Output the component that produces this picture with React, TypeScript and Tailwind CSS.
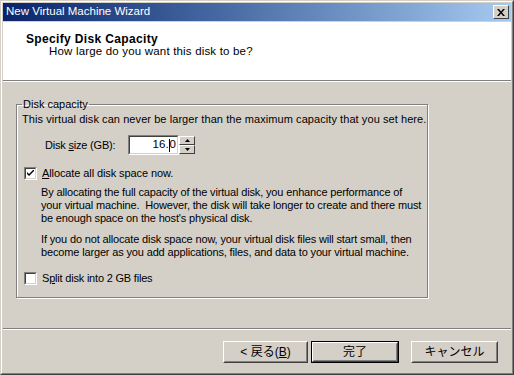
import React from "react";

const F = { fontFamily: '"Liberation Sans", Arial, sans-serif' };
const J = { fontFamily: '"Liberation Sans", "Noto Sans CJK JP", sans-serif' };

function Check({ checked }: { checked?: boolean }) {
  return (
    <div className="w-[13px] h-[13px] border border-t-[#808080] border-l-[#808080] border-r-white border-b-white shrink-0">
      <div className="w-full h-full border border-t-[#404040] border-l-[#404040] border-r-[#d4d0c8] border-b-[#d4d0c8] bg-white flex items-center justify-center">
        {checked && (
          <svg width="7" height="7" viewBox="0 0 7 7">
            <path d="M0 2 L0 4 L2 6 L7 1 L7 -1 L2 4 Z" fill="#000" />
          </svg>
        )}
      </div>
    </div>
  );
}

function Btn({ children, def, w }: { children: React.ReactNode; def?: boolean; w: string }) {
  const inner = (
    <div className="w-full h-full border border-t-white border-l-white border-r-[#404040] border-b-[#404040] bg-[#d4d0c8]">
      <div className="w-full h-full border border-t-[#d4d0c8] border-l-[#d4d0c8] border-r-[#808080] border-b-[#808080] flex items-center justify-center text-[12px] text-black">
        {children}
      </div>
    </div>
  );
  return def ? (
    <div className={`${w} h-[22px] border border-black`}>{inner}</div>
  ) : (
    <div className={`${w} h-[22px]`}>{inner}</div>
  );
}

export default function App() {
  return (
    <div className="w-[514px] h-[375px] border border-t-[#d4d0c8] border-l-[#d4d0c8] border-r-[#404040] border-b-[#404040] bg-[#d4d0c8]" style={F}>
      <div className="w-full h-full border border-t-white border-l-white border-r-[#808080] border-b-[#808080] p-[1px] flex flex-col">
        {/* title */}
        <div className="h-[18px] bg-gradient-to-r from-[#0a246a] to-[#a6caf0] flex items-center pl-[3px] pr-[2px] shrink-0">
          <span className="text-white text-[11.5px] leading-none flex-1">New Virtual Machine Wizard</span>
          <div className="w-[16px] h-[14px] border border-t-white border-l-white border-r-[#404040] border-b-[#404040] bg-[#d4d0c8] flex items-center justify-center">
            <svg width="8" height="7" viewBox="0 0 8 7">
              <path d="M0 0h2l2 2.5L6 0h2L5 3.5 8 7H6L4 4.5 2 7H0l3-3.5z" fill="#000" />
            </svg>
          </div>
        </div>
        {/* header */}
        <div className="h-[59px] bg-white border-b border-[#808080] shrink-0 mt-[1px] pl-[23px] pt-[11px]">
          <div className="text-[12px] font-bold leading-[12px] tracking-[0.35px] text-black">Specify Disk Capacity</div>
          <div className="text-[11.5px] leading-[12px] tracking-[0.18px] text-black pl-[23px] mt-[0px]">How large do you want this disk to be?</div>
        </div>
        <div className="h-[1px] bg-white shrink-0" />
        {/* body */}
        <div className="flex-1 flex flex-col">
          <fieldset className="ml-[13px] mt-[16px] w-[412px] h-[200px] border border-[#808080] shadow-[inset_1px_1px_0_#fff,1px_1px_0_#fff] pl-[5px] pr-0 text-[11px] text-black whitespace-nowrap">
            <legend className="ml-0 px-[1px] leading-[13px]">Disk capacity</legend>
            <div className="leading-[13px] mt-[2px] tracking-[0.07px]">This virtual disk can never be larger than the maximum capacity that you set here.</div>
            <div className="flex items-center mt-[9px] ml-[23px] h-[20px]">
              <span className="w-[83px] leading-[13px] tracking-[-0.2px]">Disk <u>s</u>ize (GB):</span>
              <div className="w-[51px] h-[20px] border border-t-[#808080] border-l-[#808080] border-r-white border-b-white">
                <div className="w-full h-full border border-t-[#404040] border-l-[#404040] border-r-[#d4d0c8] border-b-[#d4d0c8] bg-white flex items-center justify-end pr-[1px] text-[11.5px]">
                  <span>16.</span>
                  <span className="w-[1px] h-[13px] bg-black" />
                  <span>0</span>
                </div>
              </div>
              <div className="w-[16px] h-[18px] flex flex-col">
                {[0, 1].map((i) => (
                  <div key={i} className="h-[9px] border border-t-white border-l-white border-r-[#404040] border-b-[#404040] bg-[#d4d0c8] flex items-center justify-center">
                    <svg width="5" height="3" viewBox="0 0 5 3">
                      {i === 0 ? <path d="M2.5 0L5 3H0z" fill="#000" /> : <path d="M0 0h5L2.5 3z" fill="#000" />}
                    </svg>
                  </div>
                ))}
              </div>
            </div>
            <div className="flex items-center mt-[12px] ml-[2px] gap-[5px] h-[13px]">
              <Check checked />
              <span className="leading-[13px] tracking-[-0.1px]"><u>A</u>llocate all disk space now.</span>
            </div>
            <div className="ml-[19px] mt-[6px] leading-[13px] tracking-[-0.15px]">
              By allocating the full capacity of the virtual disk, you enhance performance of
              <br />
              your virtual machine.&nbsp; However, the disk will take longer to create and there must
              <br />
              be enough space on the host's physical disk.
            </div>
            <div className="ml-[19px] mt-[8px] leading-[13px] tracking-[-0.15px]">
              If you do not allocate disk space now, your virtual disk files will start small, then
              <br />
              become larger as you add applications, files, and data to your virtual machine.
            </div>
            <div className="flex items-center mt-[13px] ml-[2px] gap-[5px] h-[13px]">
              <Check />
              <span className="leading-[13px] tracking-[-0.2px]">S<u>p</u>lit disk into 2 GB files</span>
            </div>
          </fieldset>
          <div className="flex-1" />
          <div className="h-[1px] bg-[#808080]" />
          <div className="h-[1px] bg-white" />
          <div className="flex justify-end items-center pr-[13px] pt-[11px] pb-[9px]" style={J}>
            <Btn w="w-[85px]">&lt; 戻る(<u>B</u>)</Btn>
            <div className="w-[3px]" />
            <Btn def w="w-[88px]">完了</Btn>
            <div className="w-[12px]" />
            <Btn w="w-[87px]">キャンセル</Btn>
          </div>
        </div>
      </div>
    </div>
  );
}
